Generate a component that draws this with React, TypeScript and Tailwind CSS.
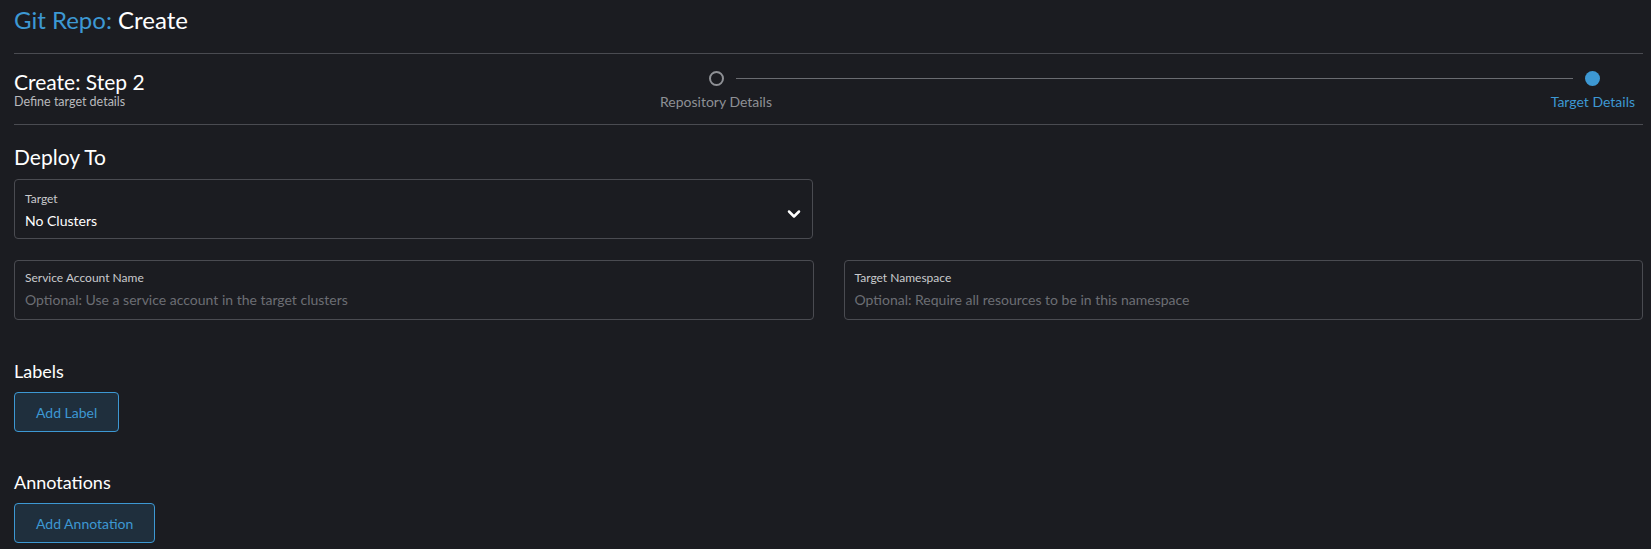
import { ChevronDown } from 'lucide-react';

const font = { fontFamily: 'Lato, "Open Sans", sans-serif' };

function Step({ label, active }: { label: string; active?: boolean }) {
  return (
    <div className="flex flex-col items-center">
      <div
        className={
          active
            ? 'w-[15px] h-[15px] rounded-full bg-[#3d98d3]'
            : 'w-[15px] h-[15px] rounded-full border-2 border-[#8e9095]'
        }
      />
      <div className={`mt-[8px] text-[14px] leading-[16px] ${active ? 'text-[#3d98d3]' : 'text-[#8e9095]'}`}>
        {label}
      </div>
    </div>
  );
}

function TextBox({ label, placeholder }: { label: string; placeholder: string }) {
  return (
    <div className="flex-1 h-[60px] rounded-[4px] border border-[#4a4b51] px-[10px] pt-[10px]">
      <div className="text-[12px] leading-[14px] text-[#c9cacd]">{label}</div>
      <div className="mt-[6px] text-[14px] leading-[17px] text-[#6c6e74]">{placeholder}</div>
    </div>
  );
}

function AddButton({ children }: { children: string }) {
  return (
    <button className="h-[40px] px-[21px] rounded-[4px] border border-[#3d98d3] bg-[#1f2f3d] text-[14px] text-[#3d98d3]">
      {children}
    </button>
  );
}

export default function App() {
  return (
    <div className="min-h-[549px] bg-[#1b1c21] pl-[14px] pr-[8px] pt-[5px] text-white" style={font}>
      <h1 className="text-[24px] leading-[29px]">
        <span className="text-[#3d98d3]">Git Repo:</span> <span className="text-white">Create</span>
      </h1>

      <div className="mt-[19px] border-t border-[#4a4b51]" />

      {/* Step header */}
      <div className="flex items-start h-[70px] pt-[16px]">
        <div>
          <div className="text-[21px] leading-[24px] text-white">Create: Step 2</div>
          <div className="text-[12.5px] leading-[16px] text-[#b8b9bd]">Define target details</div>
        </div>
        <div className="ml-auto mr-[8px] w-[975px] flex items-start pt-[1px]">
          <Step label="Repository Details" />
          {/* line runs circle to circle, reaching in over the label columns */}
          <div className="flex-1 ml-[-36px] mr-[-22px] mt-[7px] border-t border-[#6a6c71]" />
          <Step label="Target Details" active />
        </div>
      </div>

      <div className="border-t border-[#4a4b51]" />

      <h2 className="mt-[20px] text-[21px] leading-[24px] text-white">Deploy To</h2>

      <div className="mt-[10px] w-[799px] h-[60px] rounded-[4px] border border-[#4a4b51] px-[10px] pt-[12px] flex items-start">
        <div className="flex-1">
          <div className="text-[12px] leading-[14px] text-[#c9cacd]">Target</div>
          <div className="mt-[6px] text-[14px] leading-[17px] text-white">No Clusters</div>
        </div>
        <ChevronDown className="mt-[12px] mr-[-2px] text-white" size={20} strokeWidth={3} />
      </div>

      <div className="mt-[21px] flex gap-[30px]">
        <TextBox label="Service Account Name" placeholder="Optional: Use a service account in the target clusters" />
        <TextBox label="Target Namespace" placeholder="Optional: Require all resources to be in this namespace" />
      </div>

      <h3 className="mt-[40px] text-[18px] leading-[22px] text-white">Labels</h3>
      <div className="mt-[10px]">
        <AddButton>Add Label</AddButton>
      </div>

      <h3 className="mt-[39px] text-[18px] leading-[22px] text-white">Annotations</h3>
      <div className="mt-[10px]">
        <AddButton>Add Annotation</AddButton>
      </div>
    </div>
  );
}
